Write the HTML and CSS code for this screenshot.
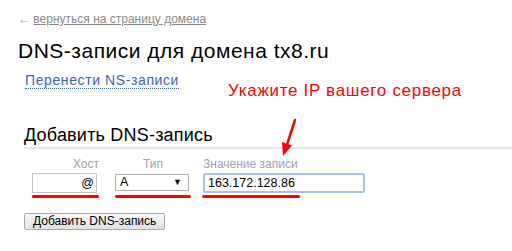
FILE: index.html
```html
<!DOCTYPE html>
<html lang="ru">

<head>
    <meta charset="UTF-8">
    <title>DNS-записи для домена tx8.ru</title>
    <link rel="stylesheet" href="styles.css">
</head>

<body>
    <div class="page">
        <div class="back">&larr; <a href="#">вернуться на страницу домена</a></div>
        <h1>DNS-записи для домена tx8.ru</h1>
        <a class="ns-link" href="#">Перенести NS-записи</a>

        <!-- annotation over the screenshot -->
        <div class="hint">Укажите IP вашего сервера</div>
        <svg class="arrow" width="30" height="45" viewBox="0 0 30 45">
            <line x1="20" y1="3" x2="12.5" y2="26" stroke="#f00" stroke-width="2.5" stroke-linecap="round"/>
            <polygon points="7,25 17,28.5 8,39" fill="#f00"/>
        </svg>

        <h2>Добавить DNS-запись</h2>
        <form class="add-form">
            <div class="fields">
                <div class="field field-host">
                    <label for="host">Хост</label>
                    <input type="text" id="host" value="@">
                    <span class="mark"></span>
                </div>
                <div class="field field-type">
                    <label for="type">Тип</label>
                    <div class="select">A <span class="caret">&#9660;</span></div>
                    <span class="mark"></span>
                </div>
                <div class="field field-value">
                    <label for="value">Значение записи</label>
                    <input type="text" id="value" value="163.172.128.86">
                    <span class="mark"></span>
                </div>
            </div>
            <button type="button">Добавить DNS-запись</button>
        </form>
    </div>
</body>

</html>
```

FILE: styles.css
```css
body {
    margin: 0;
    font-family: Arial, "Liberation Sans", sans-serif;
    color: #000;
    background: #fff;
}

.page {
    position: relative;
    padding: 11px 0 0 18px;
    height: 240px;
    overflow: hidden;
}

.back {
    font-size: 12px;
    color: #999;
    line-height: 16px;
}

.back a {
    color: #888;
}

h1 {
    font-size: 21px;
    font-weight: normal;
    letter-spacing: 0.5px;
    margin: 12px 0 0;
    line-height: 24px;
}

.ns-link {
    display: block;
    width: fit-content;
    margin: 9px 0 0 7px;
    font-size: 14px;
    letter-spacing: 0.6px;
    line-height: 16px;
    color: #3a64c4;
    text-decoration: none;
    border-bottom: 1px dotted #3a64c4;
}

.hint {
    position: absolute;
    left: 228px;
    top: 81px;
    font-size: 17px;
    letter-spacing: 0.7px;
    line-height: 20px;
    color: #f00;
}

.arrow {
    position: absolute;
    left: 275px;
    top: 117px;
}

h2 {
    font-size: 18px;
    font-weight: normal;
    letter-spacing: 0.2px;
    margin: 35px 0 0 6px;
    line-height: 22px;
    padding-bottom: 1px;
    border-bottom: 2px solid #e5e5e5;
}

.fields {
    display: flex;
    margin: 8px 0 0 14px;
}

.field {
    display: flex;
    flex-direction: column;
}

.field label {
    font-size: 12px;
    color: #a0a0a0;
    line-height: 14px;
    margin-bottom: 2px;
}

.field-host {
    width: 67px;
}

.field-host label {
    text-align: right;
}

.field-type {
    width: 76px;
    margin-left: 16px;
}

.field-type label {
    text-align: center;
}

.field-value {
    margin-left: 12px;
}

.field input,
.select {
    box-sizing: border-box;
    height: 20px;
    font-family: Arial, "Liberation Sans", sans-serif;
    font-size: 12.5px;
    border: 1px solid #c4c4c4;
    padding: 1px 3px;
    margin: 0;
}

.field-host input {
    width: 65px;
    text-align: right;
    padding-right: 2px;
}

.select {
    width: 74px;
    height: 17px;
    margin-top: 1px;
    line-height: 14px;
    display: flex;
    justify-content: space-between;
    padding: 0 6px 0 4px;
    border-color: #b0b0b0;
}

.caret {
    font-size: 9px;
}

.field-value input {
    width: 162px;
    border: 2px solid #a3c0ee;
    border-radius: 2px;
    outline: none;
}

.mark {
    display: block;
    height: 3px;
    background: #f00;
    border-radius: 2px;
    margin-top: 2px;
}

.field-type .mark {
    margin-top: 4px;
}

.field-value .mark {
    width: 98px;
    margin-left: -1px;
}

button {
    display: block;
    margin: 15px 0 0 6px;
    font-family: Arial, "Liberation Sans", sans-serif;
    font-size: 12px;
    padding: 0 8px;
    height: 17px;
    line-height: 15px;
    border: 1px solid #a8a8a8;
    border-radius: 2px;
    background: linear-gradient(#fafafa, #e0e0e0);
}
```
